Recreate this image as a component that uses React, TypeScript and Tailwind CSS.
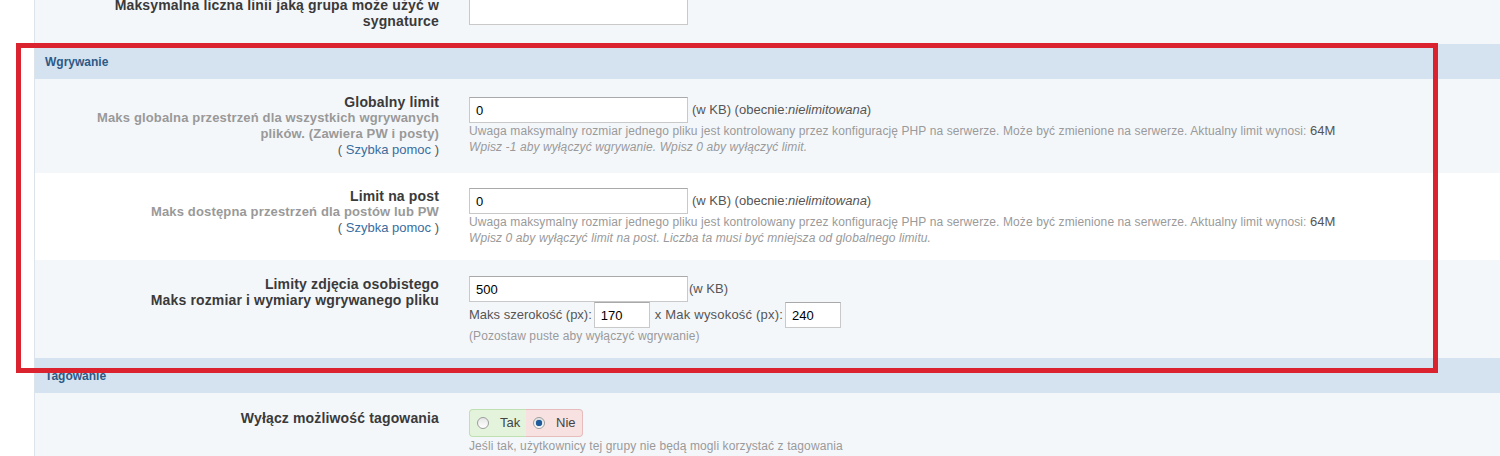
import React from "react";

const font = { fontFamily: '"Liberation Sans", Arial, sans-serif' };

function TextInput({ value, width = "w-[219px]" }: { value: string; width?: string }) {
  return (
    <input
      readOnly
      value={value}
      className={`${width} h-[26px] border border-[#c9c9c9] border-t-[#a9a9a9] bg-white px-[6px] text-[13px] text-black outline-none`}
    />
  );
}

function Header({ title }: { title: string }) {
  return (
    <div className="flex h-[35px] items-center bg-[#d5e2ef] pl-[10px] text-[12px] font-bold text-[#2c5a87]">
      {title}
    </div>
  );
}

function Help() {
  return (
    <div className="text-[13px] font-normal tracking-normal text-[#555]">
      ( <span className="text-[#3a6d9e]">Szybka pomoc</span> )
    </div>
  );
}

function Row({
  bg = "bg-[#f4f7fa]",
  labelPt,
  fieldPt,
  pb,
  label,
  children,
}: {
  bg?: string;
  labelPt: string;
  fieldPt: string;
  pb: string;
  label: React.ReactNode;
  children: React.ReactNode;
}) {
  return (
    <div className={`flex items-start ${bg} ${pb}`}>
      <div
        className={`w-[404px] shrink-0 pl-[40px] text-right text-[14px] font-bold leading-[16px] tracking-[0.15px] text-[#3a3a3a] ${labelPt}`}
      >
        {label}
      </div>
      <div className={`ml-[30px] ${fieldPt}`}>{children}</div>
    </div>
  );
}

function Radio({ checked }: { checked?: boolean }) {
  return (
    <span className="flex h-[12px] w-[12px] items-center justify-center rounded-full border border-[#9c9c9c] bg-gradient-to-b from-[#e6e6e6] to-[#ffffff]">
      {checked && <span className="h-[6px] w-[6px] rounded-full bg-[#1d5c9c] shadow-[0_0_1px_#0b3a6b]" />}
    </span>
  );
}

const note = "text-[12px] leading-[16px] tracking-[0.1px] text-[#9a9a9a]";

export default function App() {
  return (
    <div className="relative h-[456px] w-[1500px] overflow-hidden bg-white" style={font}>
      <div className="ml-[34px] mt-[-18px] border-l border-[#dce3eb]">
        <Row
          labelPt="pt-[15px]"
          fieldPt="pt-[17px]"
          pb="pb-[15px]"
          label={<div>Maksymalna liczna linii jaką grupa może użyć w sygnaturce</div>}
        >
          <TextInput value="" />
        </Row>

        <Header title="Wgrywanie" />

        <Row
          labelPt="pt-[15px]"
          fieldPt="pt-[18px]"
          pb="pb-[15px]"
          label={
            <>
              <div>Globalny limit</div>
              <div className="text-[13px] text-[#999]">
                Maks globalna przestrzeń dla wszystkich wgrywanych plików. (Zawiera PW i posty)
              </div>
              <Help />
            </>
          }
        >
          <div className="flex items-center">
            <TextInput value="0" />
            <span className="ml-[4px] text-[13px] text-[#555]">
              (w KB) (obecnie:<i>nielimitowana</i>)
            </span>
          </div>
          <div className={note}>
            Uwaga maksymalny rozmiar jednego pliku jest kontrolowany przez konfigurację PHP na serwerze. Może być
            zmienione na serwerze. Aktualny limit wynosi: <span className="text-[13px] text-[#555]">64M</span>
          </div>
          <div className={`${note} italic`}>Wpisz -1 aby wyłączyć wgrywanie. Wpisz 0 aby wyłączyć limit.</div>
        </Row>

        <Row
          bg="bg-white"
          labelPt="pt-[15px]"
          fieldPt="pt-[15px]"
          pb="pb-[14px]"
          label={
            <>
              <div>Limit na post</div>
              <div className="text-[13px] text-[#999]">Maks dostępna przestrzeń dla postów lub PW</div>
              <Help />
            </>
          }
        >
          <div className="flex items-center">
            <TextInput value="0" />
            <span className="ml-[4px] text-[13px] text-[#555]">
              (w KB) (obecnie:<i>nielimitowana</i>)
            </span>
          </div>
          <div className={note}>
            Uwaga maksymalny rozmiar jednego pliku jest kontrolowany przez konfigurację PHP na serwerze. Może być
            zmienione na serwerze. Aktualny limit wynosi: <span className="text-[13px] text-[#555]">64M</span>
          </div>
          <div className={`${note} italic`}>
            Wpisz 0 aby wyłączyć limit na post. Liczba ta musi być mniejsza od globalnego limitu.
          </div>
        </Row>

        <Row
          labelPt="pt-[16px]"
          fieldPt="pt-[16px]"
          pb="pb-[14px]"
          label={
            <>
              <div>Limity zdjęcia osobistego</div>
              <div>Maks rozmiar i wymiary wgrywanego pliku</div>
            </>
          }
        >
          <div className="flex items-center">
            <TextInput value="500" />
            <span className="ml-[1px] text-[13px] text-[#555]">(w KB)</span>
          </div>
          <div className="flex items-center text-[13px] text-[#555]">
            <span className="mr-[2px]">Maks szerokość (px):</span>
            <TextInput value="170" width="w-[56px]" />
            <span className="ml-[5px] mr-[2px] tracking-[0.2px]">x Mak wysokość (px):</span>
            <TextInput value="240" width="w-[56px]" />
          </div>
          <div className={note}>(Pozostaw puste aby wyłączyć wgrywanie)</div>
        </Row>

        <Header title="Tagowanie" />

        <Row
          labelPt="pt-[17px]"
          fieldPt="pt-[16px]"
          pb="pb-[20px]"
          label={<div>Wyłącz możliwość tagowania</div>}
        >
          <div className="flex h-[28px] w-[114px] text-[13px] text-[#444]">
            <label className="flex w-[57px] items-center gap-[11px] rounded-l-[4px] border border-r-0 border-[#bfe0b0] bg-[#e3f3dc] pl-[7px]">
              <Radio />
              <span>Tak</span>
            </label>
            <label className="flex w-[57px] items-center gap-[11px] rounded-r-[4px] border border-l-0 border-[#e6bcbc] bg-[#f7e1e1] pl-[7px]">
              <Radio checked />
              <span>Nie</span>
            </label>
          </div>
          <div className={`${note} mt-[1px]`}>Jeśli tak, użytkownicy tej grupy nie będą mogli korzystać z tagowania</div>
        </Row>
      </div>

      <div className="pointer-events-none absolute left-[16px] top-[43px] h-[330px] w-[1422px] border-[5px] border-[#da232f]" />
    </div>
  );
}
